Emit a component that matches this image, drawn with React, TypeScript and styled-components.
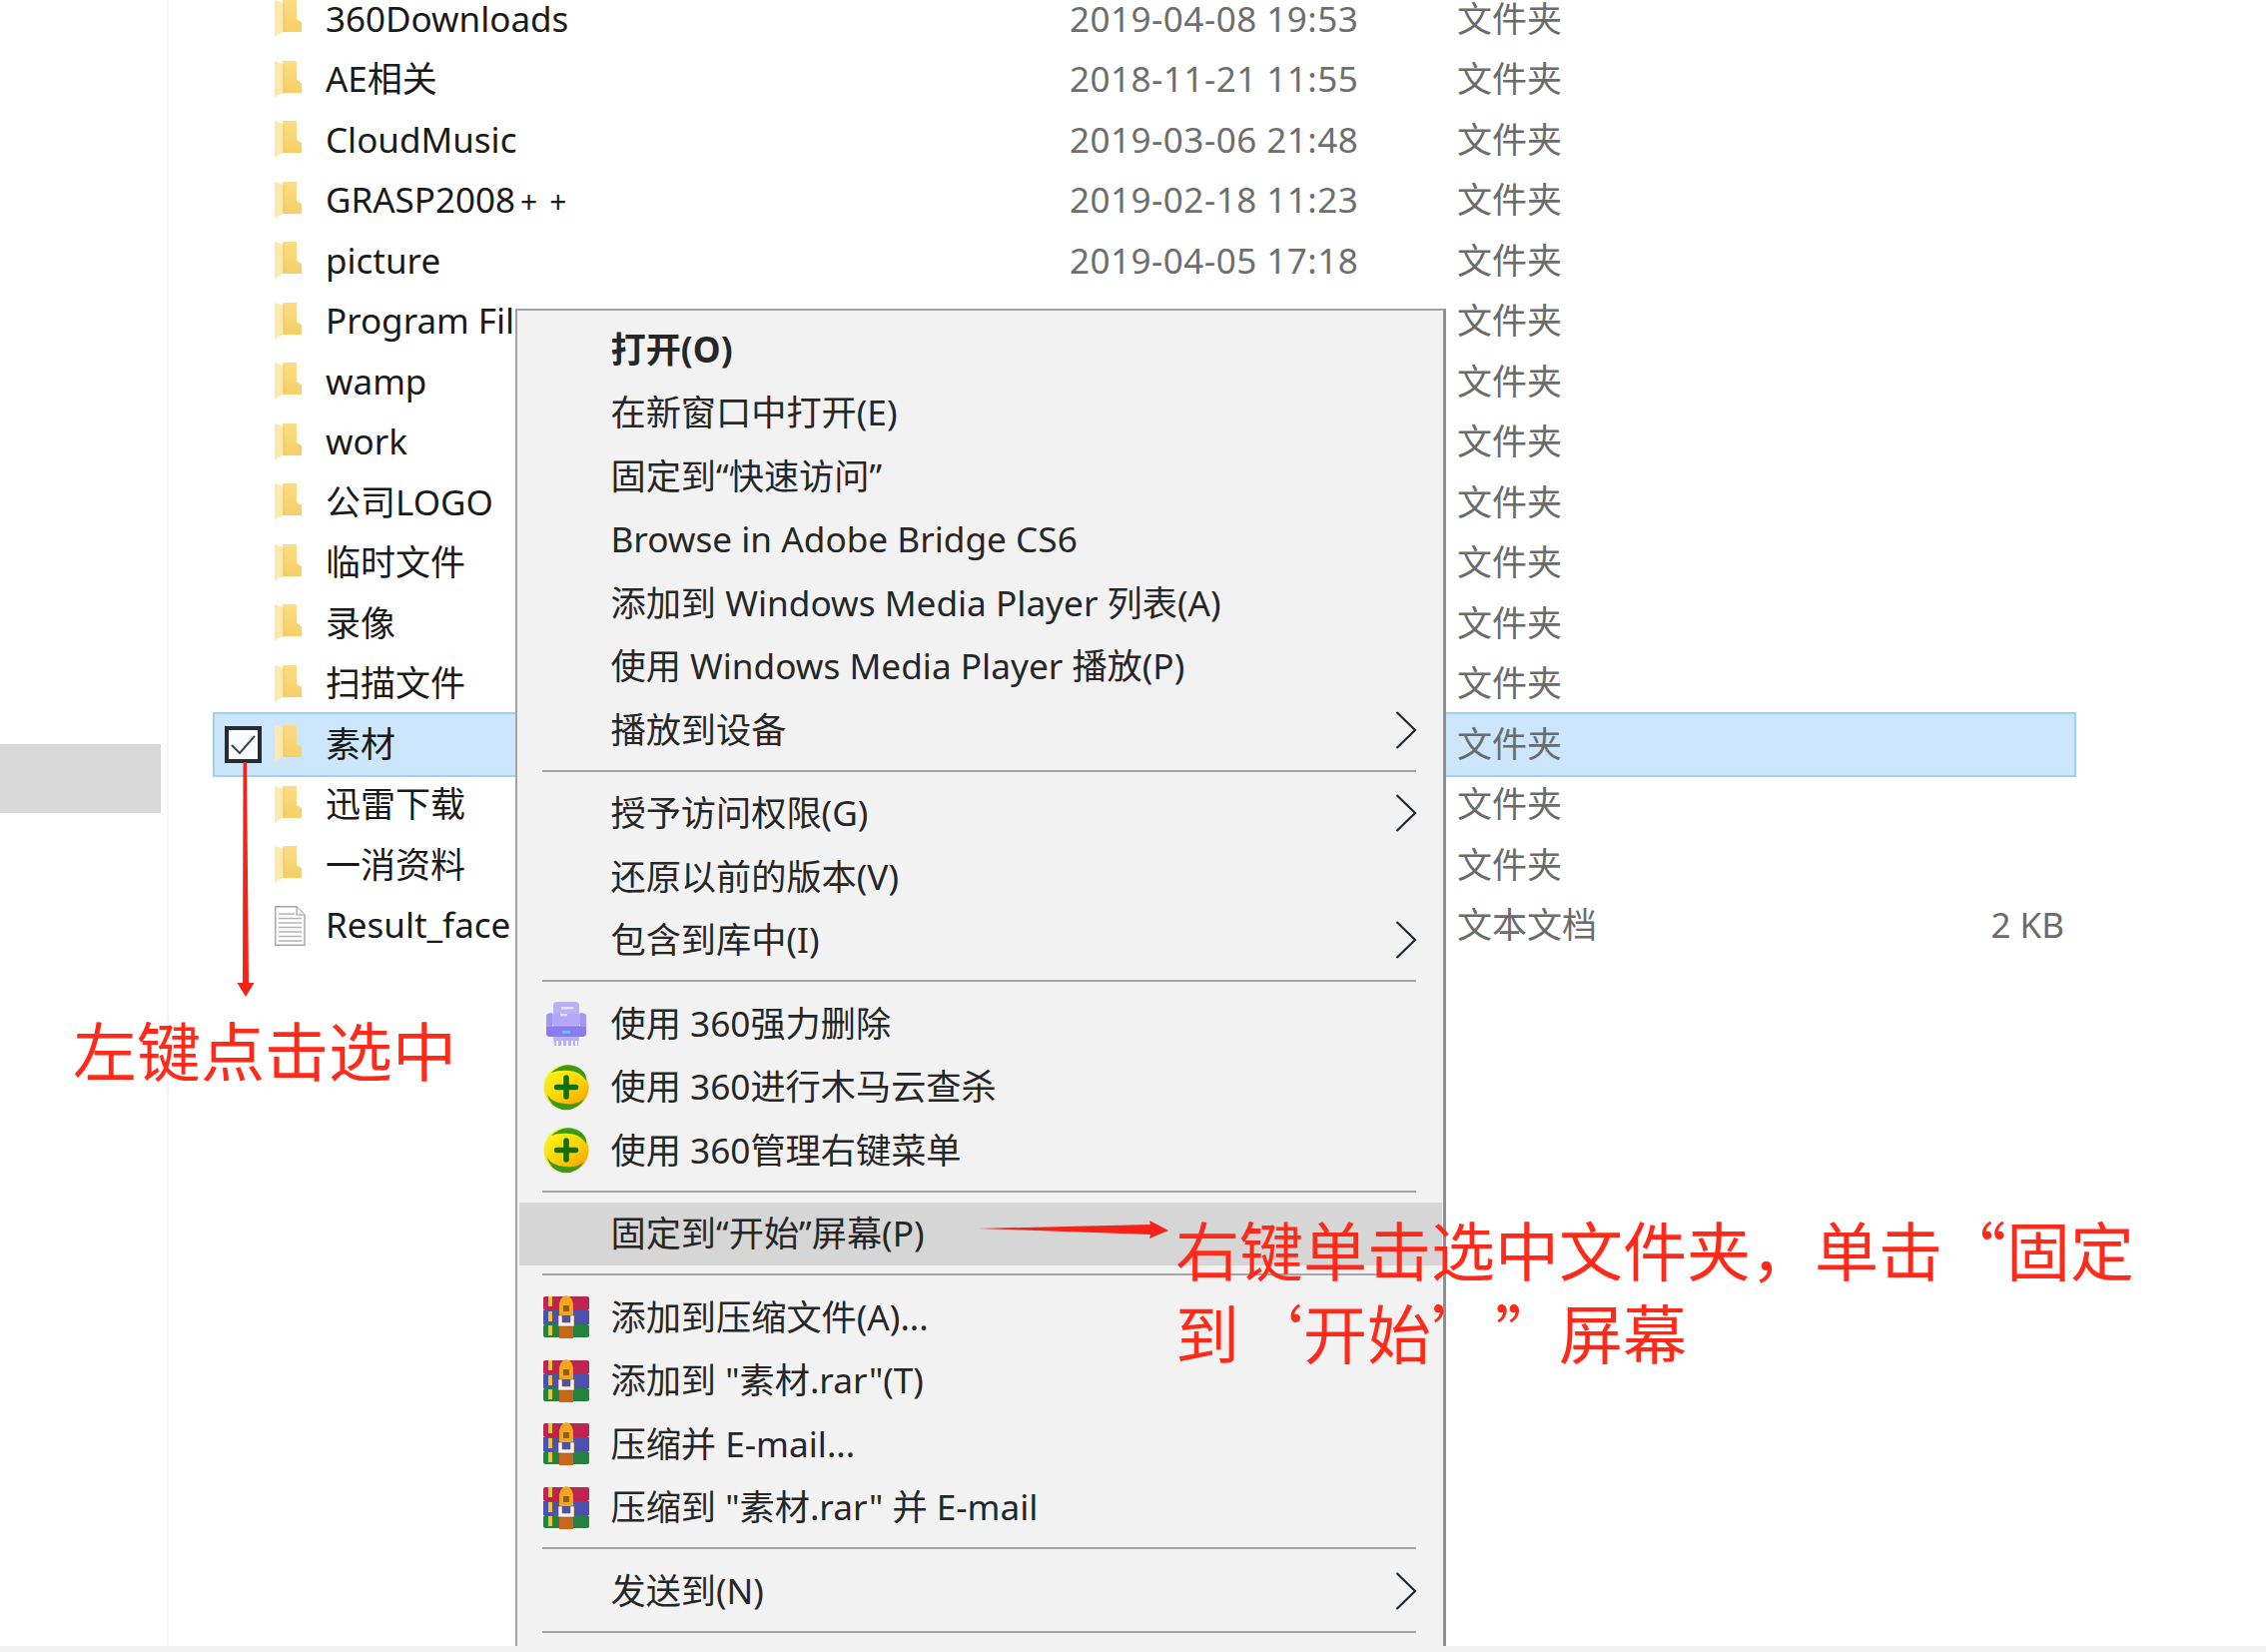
import * as React from 'react';
import styled, { createGlobalStyle } from 'styled-components';

const GlobalStyle = createGlobalStyle`
  html, body {
    margin: 0;
    padding: 0;
    background: #fff;
  }
`;

const uiFont = `"Noto Sans", "Noto Sans CJK SC", sans-serif`;

type FileEntry = {
  name: string;
  tail?: string;
  date?: string;
  type: string;
  size?: string;
  selected?: boolean;
  doc?: boolean;
};

const files: FileEntry[] = [
  { name: '360Downloads', date: '2019-04-08 19:53', type: '文件夹' },
  { name: 'AE相关', date: '2018-11-21 11:55', type: '文件夹' },
  { name: 'CloudMusic', date: '2019-03-06 21:48', type: '文件夹' },
  { name: 'GRASP2008', tail: '++', date: '2019-02-18 11:23', type: '文件夹' },
  { name: 'picture', date: '2019-04-05 17:18', type: '文件夹' },
  { name: 'Program Files', date: '2019-03-28 10:12', type: '文件夹' },
  { name: 'wamp', type: '文件夹' },
  { name: 'work', type: '文件夹' },
  { name: '公司LOGO', type: '文件夹' },
  { name: '临时文件', type: '文件夹' },
  { name: '录像', type: '文件夹' },
  { name: '扫描文件', type: '文件夹' },
  { name: '素材', type: '文件夹', selected: true },
  { name: '迅雷下载', type: '文件夹' },
  { name: '一消资料', type: '文件夹' },
  { name: 'Result_face', type: '文本文档', size: '2 KB', doc: true },
];

type MenuEntry = { label: string; icon?: 'shred' | 'q360' | 'rar'; arrow?: boolean; bold?: boolean; active?: boolean };

const menuGroups: MenuEntry[][] = [
  [
    { label: '打开(O)', bold: true },
    { label: '在新窗口中打开(E)' },
    { label: '固定到“快速访问”' },
    { label: 'Browse in Adobe Bridge CS6' },
    { label: '添加到 Windows Media Player 列表(A)' },
    { label: '使用 Windows Media Player 播放(P)' },
    { label: '播放到设备', arrow: true },
  ],
  [
    { label: '授予访问权限(G)', arrow: true },
    { label: '还原以前的版本(V)' },
    { label: '包含到库中(I)', arrow: true },
  ],
  [
    { label: '使用 360强力删除', icon: 'shred' },
    { label: '使用 360进行木马云查杀', icon: 'q360' },
    { label: '使用 360管理右键菜单', icon: 'q360' },
  ],
  [{ label: '固定到“开始”屏幕(P)', active: true }],
  [
    { label: '添加到压缩文件(A)...', icon: 'rar' },
    { label: '添加到 "素材.rar"(T)', icon: 'rar' },
    { label: '压缩并 E-mail...', icon: 'rar' },
    { label: '压缩到 "素材.rar" 并 E-mail', icon: 'rar' },
  ],
  [{ label: '发送到(N)', arrow: true }],
];

function FolderIcon() {
  return (
    <svg width="27" height="40" viewBox="0 0 27 40">
      <defs>
        <linearGradient id="folderBody" x1="0" y1="0" x2="0" y2="1">
          <stop offset="0" stopColor="#fbdc86" />
          <stop offset="1" stopColor="#f6cf66" />
        </linearGradient>
      </defs>
      <path d="M8 1 H22 V20 L27 23 V33 H8 Z" fill="url(#folderBody)" />
      <path d="M0 1 L9 4 V33 L2 36 L1 39 L0 36 Z" fill="#fde9ac" />
      <path d="M9 4 V33" stroke="#eec25a" strokeWidth="1" fill="none" />
    </svg>
  );
}

function DocIcon() {
  return (
    <svg width="31" height="40" viewBox="0 0 31 40">
      <path d="M0.8 0.8 H22 L30 9 V39.2 H0.8 Z" fill="#fff" stroke="#a3a3a3" strokeWidth="1.4" />
      <path d="M22 0.8 V9 H30" fill="#efefef" stroke="#a3a3a3" strokeWidth="1.2" />
      <path
        d="M4 8 H20 M4 12.5 H27 M4 17 H27 M4 21.5 H27 M4 26 H27 M4 30.5 H27 M4 35 H27"
        stroke="#b4b4b4"
        strokeWidth="1.6"
      />
    </svg>
  );
}

function CheckIcon() {
  return (
    <svg width="37" height="37" viewBox="0 0 37 37">
      <rect x="2" y="2" width="33" height="33" fill="#f7fbff" stroke="#2b2b2b" strokeWidth="4" />
      <path d="M7 19 L15 27 L30 10" fill="none" stroke="#444" strokeWidth="2" />
    </svg>
  );
}

function ChevronIcon() {
  return (
    <svg width="22" height="38" viewBox="0 0 22 38">
      <path d="M1.5 1 L20 19 L1.5 37" fill="none" stroke="#1f2730" strokeWidth="2.2" />
    </svg>
  );
}

function ShredderIcon() {
  return (
    <svg width="46" height="46" viewBox="0 0 46 46">
      <rect x="10" y="1" width="26" height="30" rx="4" fill="#b9b0f7" />
      <path d="M9 13 H37 V24 H9 Z" fill="#b2a8f6" />
      <path d="M3 15 Q3 12 9 12 V25 H37 V12 Q43 12 43 15 V32 Q43 36 39 36 H7 Q3 36 3 32 Z" fill="#a297f3" />
      <path d="M3 26 H43 V32 Q43 36 39 36 H7 Q3 36 3 32 Z" fill="#8a7cf0" />
      <rect x="18" y="6" width="12" height="2.4" fill="#e6e2fd" />
      <rect x="17" y="13" width="7" height="2.4" fill="#e6e2fd" />
      <rect x="19" y="30" width="8" height="2.6" fill="#63c8f5" />
      <path d="M10 36 H36 L35 45 H11 Z" fill="#b9b0f7" />
      <path d="M14 40 V46 M19 40 V46 M24 40 V46 M29 40 V46 M33 40 V46" stroke="#f2f2f2" strokeWidth="2" />
    </svg>
  );
}

function Q360Icon() {
  return (
    <svg width="46" height="47" viewBox="0 0 46 47">
      <defs>
        <linearGradient id="q360Fill" x1="0.2" y1="0.1" x2="0.8" y2="0.95">
          <stop offset="0" stopColor="#fff21a" />
          <stop offset="0.55" stopColor="#fdd308" />
          <stop offset="1" stopColor="#f8a300" />
        </linearGradient>
      </defs>
      <circle cx="23" cy="23.5" r="22.5" fill="url(#q360Fill)" />
      <path d="M8 9 Q22 -4 37 5 Q44 10 43 17 Q36 7 26 7 Q16 6 8 9 Z" fill="#3e9a12" />
      <path d="M4 31 Q9 39 21 40 Q33 42 41 35 Q33 48 19 46 Q7 43 4 31 Z" fill="#3e9a12" />
      <path d="M23 14 V33 M13.5 23.5 H32.5" stroke="#0e6e10" strokeWidth="5.5" strokeLinecap="round" />
    </svg>
  );
}

function RarIcon() {
  return (
    <svg width="46" height="43" viewBox="0 0 46 43">
      <rect x="0" y="1" width="46" height="14" rx="2" fill="#bd2450" />
      <rect x="0" y="15" width="46" height="14" fill="#4b51ad" />
      <rect x="0" y="29" width="46" height="13" rx="2" fill="#22823f" />
      <path d="M5 1 H9 V11 H5 Z M5 16 H9 V26 H5 Z M5 30 H9 V40 H5 Z" fill="#f2c12e" />
      <rect x="16" y="29" width="14" height="14" fill="#c9661c" />
      <path d="M16 13 Q15 2 23 0 Q31 2 30 13 L30 20 H16 Z" fill="#f0a91f" />
      <rect x="20" y="10" width="6" height="6" fill="#9a5a12" />
      <path d="M15 20 H19 V27 H27 V20 H31 V31 H15 Z" fill="#f7f3ea" stroke="#8b5a2a" strokeWidth="0.6" />
    </svg>
  );
}

const Page = styled.div`
  position: relative;
  width: 2269px;
  height: 1654px;
  overflow: hidden;
  display: grid;
  grid-template-columns: 167px 1fr;
  background: #fff;
  font-family: ${uiFont};
`;

const Sidebar = styled.aside`
  padding: 745px 6px 0 0;
`;

const SidebarItem = styled.div`
  height: 69px;
  background: #d9d9d9;
`;

const FilePane = styled.main`
  border-left: 2px solid #f4f4f4;
  padding-left: 44px;
`;

const FileList = styled.div`
  margin-top: -11px;
  width: 1866px;
`;

const FileRow = styled.div<{ $selected?: boolean }>`
  position: relative;
  box-sizing: border-box;
  height: 60.5px;
  padding: 0 12px;
  display: grid;
  grid-template-columns: 50px 51px 745px 388px 1fr auto;
  align-items: center;

  ${p => p.$selected && `
    &::before {
      content: '';
      position: absolute;
      inset: -2px 0;
      background: #cce6fd;
      border: 2px solid #9fd0f8;
    }
  `}

  & > * {
    position: relative;
  }
`;

const CheckSlot = styled.span`
  display: flex;
  height: 37px;
`;

const FileIconSlot = styled.span`
  display: flex;
`;

const FileName = styled.span`
  padding-bottom: 2px;
  font-size: 35px;
  line-height: 1;
  color: #1a1a1a;
  white-space: nowrap;
`;

const NameTail = styled.span`
  margin-left: 5px;
  font-size: 30px;
  letter-spacing: 12px;
`;

const FileDate = styled.span`
  padding-bottom: 2px;
  font-size: 35px;
  line-height: 1;
  letter-spacing: 0.5px;
  color: #6e6e6e;
  white-space: nowrap;
`;

const FileType = styled.span`
  padding-bottom: 2px;
  font-size: 35px;
  line-height: 1;
  color: #6b6b6b;
  white-space: nowrap;
`;

const FileSize = styled.span`
  padding-bottom: 2px;
  font-size: 35px;
  line-height: 1;
  color: #6b6b6b;
`;

const BottomStrip = styled.div`
  position: absolute;
  left: 0;
  right: 0;
  bottom: 0;
  height: 6px;
  background: #f1f1f1;
`;

const ContextMenu = styled.div`
  position: absolute;
  left: 516px;
  top: 309px;
  box-sizing: border-box;
  width: 932px;
  height: 1339px;
  padding: 7px 0 0;
  background: #f2f2f2;
  border: solid #a2a2a2;
  border-width: 2px 3px 0 2px;
  border-right-color: #8f8f8f;
  overflow: hidden;
`;

const MenuRow = styled.div<{ $active?: boolean; $bold?: boolean }>`
  height: 63.5px;
  margin: 0 1px 0 2px;
  display: grid;
  grid-template-columns: 91.5px 1fr 24px;
  align-items: center;
  background: ${p => (p.$active ? '#d6d6d6' : 'transparent')};
  font-size: 35.2px;
  font-weight: ${p => (p.$bold ? 700 : 400)};
  color: #262626;
  white-space: nowrap;
`;

const MenuLabel = styled.span`
  padding-bottom: 2px;
  line-height: 1.2;
`;

const MenuIconSlot = styled.span`
  display: flex;
  justify-content: center;
  padding-left: 1px;
  width: 46px;
  margin-left: 23px;
`;

const ArrowSlot = styled.span`
  display: flex;
  margin-left: -23px;
`;

const Separator = styled.div`
  height: 2px;
  margin: 8px 27px 10px 25px;
  background: #a6a6a6;
`;

const Note = styled.div<{ $left: number; $top: number; $width: number }>`
  position: absolute;
  left: ${p => p.$left}px;
  top: ${p => p.$top}px;
  width: ${p => p.$width}px;
  font-family: "Noto Sans CJK SC", sans-serif;
  font-size: 64px;
  line-height: 83px;
  color: #ff2a1a;
  text-spacing-trim: space-all;
`;

const ArrowOverlay = styled.svg`
  position: absolute;
  left: 0;
  top: 0;
  pointer-events: none;
`;

function MenuIcon({ kind }: { kind: MenuEntry['icon'] }) {
  if (kind === 'shred') return <ShredderIcon />;
  if (kind === 'q360') return <Q360Icon />;
  if (kind === 'rar') return <RarIcon />;
  return null;
}

export default function App() {
  return (
    <Page lang="zh-CN">
      <GlobalStyle />
      <Sidebar>
        <SidebarItem />
      </Sidebar>
      <FilePane>
        <FileList>
          {files.map(file => (
            <FileRow key={file.name} $selected={file.selected}>
              <CheckSlot>{file.selected && <CheckIcon />}</CheckSlot>
              <FileIconSlot>{file.doc ? <DocIcon /> : <FolderIcon />}</FileIconSlot>
              <FileName>
                {file.name}
                {file.tail && <NameTail>{file.tail}</NameTail>}
              </FileName>
              <FileDate>{file.date}</FileDate>
              <FileType>{file.type}</FileType>
              <FileSize>{file.size}</FileSize>
            </FileRow>
          ))}
        </FileList>
      </FilePane>

      <ContextMenu>
        {menuGroups.map((group, index) => (
          <React.Fragment key={index}>
            {group.map(item => (
              <MenuRow key={item.label} $active={item.active} $bold={item.bold}>
                <MenuIconSlot>
                  <MenuIcon kind={item.icon} />
                </MenuIconSlot>
                <MenuLabel>{item.label}</MenuLabel>
                {item.arrow && (
                  <ArrowSlot>
                    <ChevronIcon />
                  </ArrowSlot>
                )}
              </MenuRow>
            ))}
            <Separator />
          </React.Fragment>
        ))}
      </ContextMenu>

      <BottomStrip />

      <ArrowOverlay width="2269" height="1654">
        <path d="M243.5 763 H247 L249 984 H254.5 L246 998 L237.5 984 H243 Z" fill="#f5221a" />
        <path d="M979 1230 L1152 1226 L1151 1222 L1170 1232 L1151 1240 L1152 1236 Z" fill="#f5221a" />
      </ArrowOverlay>

      <Note $left={73} $top={1008} $width={400}>左键点击选中</Note>
      <Note $left={1177} $top={1208} $width={980}>
        右键单击选中文件夹，单击“固定到‘开始’”屏幕
      </Note>
    </Page>
  );
}
